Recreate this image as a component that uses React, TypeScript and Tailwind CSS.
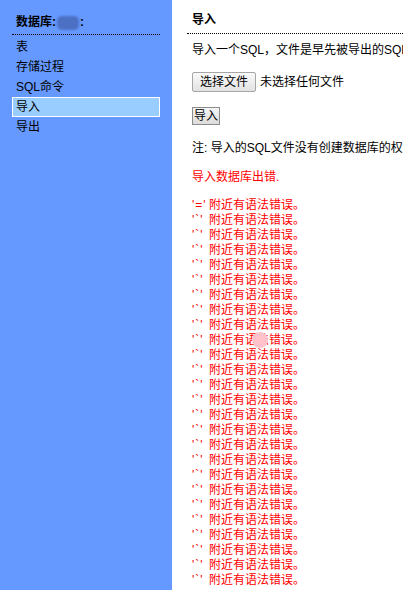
const navItems = ['表', '存储过程', 'SQL命令', '导入', '导出']

const errorLines = Array.from({ length: 26 }, (_, i) => (i === 0 ? "'='" : "'`'"))

export default function App() {
  return (
    <div
      className="relative flex h-[590px] w-[403px] overflow-hidden bg-white text-[12px] leading-[15px] text-black"
      style={{ fontFamily: '"Liberation Sans", "Noto Sans CJK SC", sans-serif' }}
    >
      <aside className="w-[172px] shrink-0 bg-[#6699ff] px-[12px]">
        <div className="flex items-center border-b border-dotted border-black pt-[15px] pb-[4px] pl-[4px] font-bold">
          <span>数据库:</span>
          <span className="ml-[1px] h-[14px] w-[22px] rounded-[5px] bg-[#4c70c4] blur-[1px]" />
          <span className="ml-[1px]">:</span>
        </div>
        <ul className="mt-[2px]">
          {navItems.map((item) => (
            <li
              key={item}
              className={
                item === '导入'
                  ? 'h-[20px] border border-white bg-[#99ccff] px-[3px] leading-[18px]'
                  : 'h-[20px] border border-transparent px-[3px] leading-[18px]'
              }
            >
              {item}
            </li>
          ))}
        </ul>
      </aside>

      <main className="min-w-0 flex-1 whitespace-nowrap pl-[15px]">
        <div className="border-b border-dotted border-black pt-[13px] pb-[5px] pl-[5px] font-bold">导入</div>
        <div className="pl-[5px]">
          <p className="mt-[9px]">导入一个SQL，文件是早先被导出的SQL文件</p>
          <div className="mt-[14px] flex items-center gap-[4px]">
            <button
              type="button"
              className="h-[20px] w-[64px] rounded-[2px] border border-[#a6a6a6] bg-gradient-to-b from-[#fafafa] to-[#e2e2e2] text-[12px]"
            >
              选择文件
            </button>
            <span>未选择任何文件</span>
          </div>
          <button
            type="button"
            className="mt-[15px] block h-[18px] w-[28px] border border-[#8c8c8c] bg-gradient-to-b from-[#f4f4f4] to-[#dcdcdc] text-[12px] leading-[14px]"
          >
            导入
          </button>
          <p className="mt-[16px]">注: 导入的SQL文件没有创建数据库的权限</p>
          <p className="mt-[14px] text-[#ff0000]">导入数据库出错.</p>
          <div className="mt-[13px] text-[#ff0000]">
            {errorLines.map((q, i) => (
              <div key={i} className="flex">
                <span className="w-[17px] tracking-[1px]">{q}</span>
                <span>附近有语法错误。</span>
              </div>
            ))}
          </div>
        </div>
      </main>

      <span className="absolute left-[252px] top-[332px] h-[16px] w-[16px] rounded-full bg-[#ffc2ca]" />
    </div>
  )
}
